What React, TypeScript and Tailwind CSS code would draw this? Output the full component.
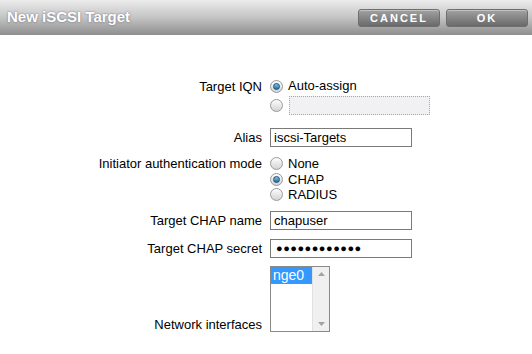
import React from 'react';

function Radio({ checked }: { checked?: boolean }) {
    return (
        <span className="relative inline-flex h-[13px] w-[13px] shrink-0 items-center justify-center rounded-full border border-[#9a9a9a] bg-gradient-to-b from-[#fdfdfd] to-[#d4d4d4]">
            {checked && (
                <span className="h-[7px] w-[7px] rounded-full border border-[#1b4f74] bg-gradient-to-b from-[#7fc3ec] to-[#1f6fa8]" />
            )}
        </span>
    );
}

function Row({ label, h, align = 'center', children }: { label: string; h: string; align?: 'center' | 'start' | 'end'; children: React.ReactNode }) {
    const items = align === 'start' ? 'items-start' : align === 'end' ? 'items-end' : 'items-center';
    return (
        <div className={`flex ${items} ${h}`}>
            <div className="w-[262px] shrink-0 text-right leading-[15px]">{label}</div>
            <div className="ml-[8px]">{children}</div>
        </div>
    );
}

export default function App() {
    return (
        <div className="h-[354px] w-[532px] overflow-hidden bg-white text-[13px] text-black" style={{ fontFamily: '"Liberation Sans", Arial, sans-serif' }}>
            {/* header */}
            <div className="flex h-[35px] items-center justify-between bg-gradient-to-b from-[#ececec] via-[#c4c4c4] to-[#8e8e8e] pl-[7px] pr-[4px]">
                <span className="text-[15px] font-bold text-white [text-shadow:0_0_2px_rgba(60,60,90,0.7)]">New iSCSI Target</span>
                <div className="flex gap-[6px]">
                    <button className="h-[18px] w-[82px] rounded-[3px] border border-[#6e6e6e] bg-gradient-to-b from-[#a2a2a2] to-[#6a6a6a] text-[11px] font-bold tracking-[2px] text-white shadow-[inset_0_1px_0_rgba(255,255,255,0.35)]">CANCEL</button>
                    <button className="h-[18px] w-[82px] rounded-[3px] border border-[#6e6e6e] bg-gradient-to-b from-[#a2a2a2] to-[#6a6a6a] text-[11px] font-bold tracking-[2px] text-white shadow-[inset_0_1px_0_rgba(255,255,255,0.35)]">OK</button>
                </div>
            </div>

            <div className="flex flex-col pt-[43px]">
                <Row label="Target IQN" h="h-[16px]">
                    <div className="flex items-center gap-[5px]">
                        <Radio checked />
                        <span>Auto-assign</span>
                    </div>
                </Row>
                <div className="flex h-[22px] items-center pl-[270px]">
                    <Radio />
                    <div className="ml-[6px] h-[19px] w-[141px] border border-dotted border-[#a8a8a8] bg-[#f1f1f3]" />
                </div>

                <div className="h-[12px]" />
                <Row label="Alias" h="h-[19px]">
                    <div className="flex h-[19px] w-[142px] items-center border border-[#7a7a7a] px-[3px]">iscsi-Targets</div>
                </Row>

                <div className="h-[9px]" />
                <Row label="Initiator authentication mode" h="h-[46px]" align="start">
                    <div className="flex flex-col">
                        {[
                            ['None', false],
                            ['CHAP', true],
                            ['RADIUS', false],
                        ].map(([t, c]) => (
                            <div key={t as string} className="flex h-[15.5px] items-center gap-[5px]">
                                <Radio checked={c as boolean} />
                                <span>{t as string}</span>
                            </div>
                        ))}
                    </div>
                </Row>

                <div className="h-[9px]" />
                <Row label="Target CHAP name" h="h-[19px]">
                    <div className="flex h-[19px] w-[142px] items-center border border-[#7a7a7a] px-[3px]">chapuser</div>
                </Row>

                <div className="h-[9px]" />
                <Row label="Target CHAP secret" h="h-[19px]">
                    <div className="flex h-[19px] w-[142px] items-center border border-[#7a7a7a] pl-[5px] text-[11px] tracking-[0.5px]">●●●●●●●●●●●●</div>
                </Row>

                <div className="h-[8px]" />
                <Row label="Network interfaces" h="h-[66px]" align="end">
                    <div className="flex h-[66px] w-[60px] border border-[#8a8a8a]">
                        <div className="flex-1">
                            <div className="bg-[#3399ff] px-[2px] text-[14px] leading-[17px] text-white">nge0</div>
                        </div>
                        <div className="flex w-[17px] flex-col items-center justify-between border-l border-[#e2e2e2] bg-[#f0f0f0] py-[5px]">
                            <svg width="7" height="4" viewBox="0 0 7 4"><path d="M3.5 0L7 4H0z" fill="#a3a3a3" /></svg>
                            <svg width="7" height="4" viewBox="0 0 7 4"><path d="M0 0h7L3.5 4z" fill="#a3a3a3" /></svg>
                        </div>
                    </div>
                </Row>
            </div>
        </div>
    );
}
